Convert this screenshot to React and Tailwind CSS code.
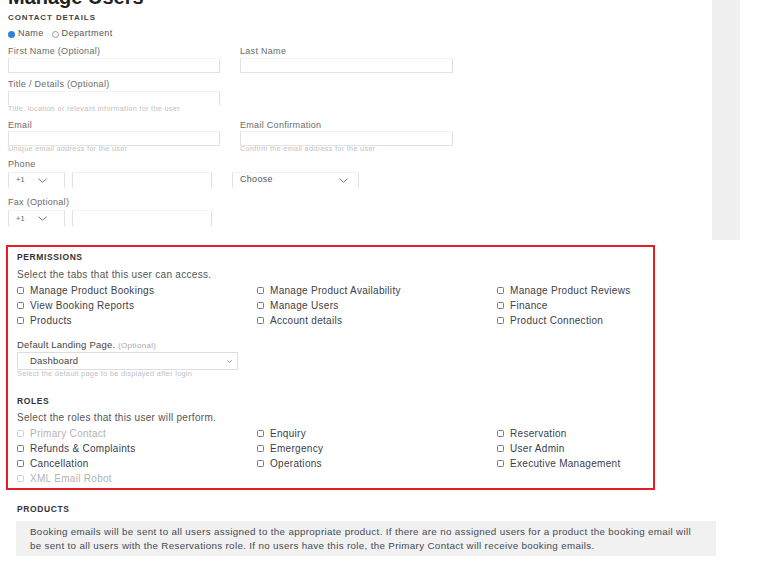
import React from "react";

const permissions = [
  ["Manage Product Bookings", "Manage Product Availability", "Manage Product Reviews"],
  ["View Booking Reports", "Manage Users", "Finance"],
  ["Products", "Account details", "Product Connection"],
];

const roles = [
  [{ name: "Primary Contact", disabled: true }, { name: "Enquiry" }, { name: "Reservation" }],
  [{ name: "Refunds & Complaints" }, { name: "Emergency" }, { name: "User Admin" }],
  [{ name: "Cancellation" }, { name: "Operations" }, { name: "Executive Management" }],
  [{ name: "XML Email Robot", disabled: true }],
];

const Chevron = ({ className = "w-[9px] h-[5px]", color = "#666" }) => (
  <svg viewBox="0 0 10 5" className={className} fill="none">
    <polyline points="0.5,0.5 5,4.5 9.5,0.5" stroke={color} strokeWidth="1" />
  </svg>
);

const Label = ({ children }) => (
  <p className="text-[9px] leading-[10px] tracking-[0.3px] text-[#6b6b6b]">{children}</p>
);

const Helper = ({ children }) => (
  <p className="text-[7.3px] leading-[6px] tracking-[0.3px] text-[#c2c2c2]">{children}</p>
);

const Input = ({ className = "" }) => (
  <div className={`border border-[#e2e2e2] border-t-[#f3f3f3] bg-white ${className}`} />
);

const Check = ({ name, disabled }) => (
  <div className="flex items-center gap-[6px] h-[15px]">
    <span
      className={`w-[7px] h-[7px] rounded-[1.5px] border ${
        disabled ? "border-[#d0d0d0]" : "border-[#7a7a7a]"
      }`}
    />
    <span
      className={`text-[10px] tracking-[0.3px] ${
        disabled ? "text-[#b3b3b3]" : "text-[#3b4049]"
      }`}
    >
      {name}
    </span>
  </div>
);

const SectionTitle = ({ children, className = "" }) => (
  <p className={`text-[8.5px] leading-[10px] font-bold tracking-[0.6px] text-[#333] ${className}`}>
    {children}
  </p>
);

const App = () => {
  return (
    <div
      className="w-[768px] h-[561px] overflow-hidden bg-white"
      style={{ fontFamily: '"Liberation Sans", Arial, sans-serif' }}
    >
      {/* contact details */}
      <div className="flex">
        <div className="w-[704px] ml-[8px]">
          <h1 className="mt-[-13px] text-[20px] leading-[20px] font-bold text-[#222]">
            Manage Users
          </h1>
          <p className="mt-[6px] text-[8px] leading-[10px] font-bold tracking-[0.9px] text-[#444]">
            CONTACT DETAILS
          </p>
          <div className="mt-[6px] h-[10px] flex items-center text-[9px] tracking-[0.4px] text-[#555]">
            <span className="w-[7px] h-[7px] rounded-full bg-[#2f7fe6]" />
            <span className="ml-[3px]">Name</span>
            <span className="ml-[8px] w-[7px] h-[7px] rounded-full border border-[#9a9a9a]" />
            <span className="ml-[3px]">Department</span>
          </div>

          <div className="mt-[7px] grid grid-cols-[212px_213px] gap-x-[20px]">
            <Label>First Name (Optional)</Label>
            <Label>Last Name</Label>
            <Input className="mt-[2px] h-[15px]" />
            <Input className="mt-[2px] h-[15px]" />
          </div>

          <div className="mt-[6px] w-[212px]">
            <Label>Title / Details (Optional)</Label>
            <Input className="mt-[2px] h-[15px] border-b-transparent" />
            <Helper>Title, location or relevant information for the user</Helper>
          </div>

          <div className="mt-[8px] grid grid-cols-[212px_213px] gap-x-[20px]">
            <Label>Email</Label>
            <Label>Email Confirmation</Label>
            <div className="mt-[1px]">
              <Input className="h-[15px]" />
              <Helper>Unique email address for the user</Helper>
            </div>
            <div className="mt-[1px]">
              <Input className="h-[15px]" />
              <Helper>Confirm the email address for the user</Helper>
            </div>
          </div>

          <div className="mt-[7px]">
            <Label>Phone</Label>
            <div className="mt-[3px] flex h-[16px]">
              <div className="w-[57px] border border-[#e2e2e2] border-t-[#f3f3f3] border-b-transparent flex items-center pl-[7px] gap-[13px]">
                <span className="text-[7.5px] text-[#666]">+1</span>
                <Chevron />
              </div>
              <Input className="ml-[7px] w-[140px] border-b-transparent" />
              <div className="ml-[20px] w-[127px] border border-[#e2e2e2] border-t-[#f3f3f3] border-b-transparent flex items-center justify-between pl-[7px] pr-[10px]">
                <span className="text-[9px] tracking-[0.3px] text-[#555]">Choose</span>
                <Chevron />
              </div>
            </div>
          </div>

          <div className="mt-[9px]">
            <Label>Fax (Optional)</Label>
            <div className="mt-[3px] flex h-[17px]">
              <div className="w-[57px] border border-[#e2e2e2] border-t-[#f3f3f3] border-b-transparent flex items-center pl-[7px] gap-[13px]">
                <span className="text-[7.5px] text-[#666]">+1</span>
                <Chevron />
              </div>
              <Input className="ml-[7px] w-[140px] border-b-transparent" />
            </div>
          </div>
        </div>
        <div className="w-[28px] h-[240px] bg-[#f0f0f0]" />
      </div>

      {/* permissions & roles */}
      <div className="mt-[5px] ml-[6px] w-[649px] h-[245px] border-2 border-[#e41e26] pl-[9px] pt-[5px]">
        <SectionTitle>PERMISSIONS</SectionTitle>
        <p className="mt-[7px] text-[10px] leading-[12px] tracking-[0.3px] text-[#555]">
          Select the tabs that this user can access.
        </p>
        <div className="mt-[2px] grid grid-cols-[240px_240px_1fr]">
          {permissions.flat().map((p) => (
            <Check key={p} name={p} />
          ))}
        </div>

        <p className="mt-[12px] text-[9.5px] leading-[10px] tracking-[0.2px] text-[#444]">
          Default Landing Page. <span className="text-[8px] tracking-[0.3px] text-[#aaa]">(Optional)</span>
        </p>
        <div className="mt-[1px] w-[221px] h-[18px] border border-[#dedede] flex items-center justify-between pl-[12px] pr-[5px]">
          <span className="text-[9.5px] tracking-[0.2px] text-[#444]">Dashboard</span>
          <Chevron className="w-[5px] h-[3px]" color="#444" />
        </div>
        <p className="mt-[1px] text-[7.3px] leading-[6px] tracking-[0.3px] text-[#c0c0cc]">
          Select the default page to be displayed after login
        </p>

        <SectionTitle className="mt-[19px]">ROLES</SectionTitle>
        <p className="mt-[6px] text-[10px] leading-[12px] tracking-[0.3px] text-[#555]">
          Select the roles that this user will perform.
        </p>
        <div className="mt-[2px] grid grid-cols-[240px_240px_1fr]">
          {roles.flat().map((r) => (
            <Check key={r.name} name={r.name} disabled={r.disabled} />
          ))}
        </div>
      </div>

      {/* products */}
      <div className="ml-[17px]">
        <SectionTitle className="mt-[14px]">PRODUCTS</SectionTitle>
      </div>
      <div className="mt-[7px] ml-[16px] w-[700px] h-[35px] bg-[#f1f1f1] pl-[14px] pt-[4px] text-[9.8px] leading-[13.5px] tracking-[0.33px] text-[#454a52]">
        Booking emails will be sent to all users assigned to the appropriate product. If there are no assigned users for a product the booking email will
        <br />
        be sent to all users with the Reservations role. If no users have this role, the Primary Contact will receive booking emails.
      </div>
    </div>
  );
};

export default App;
